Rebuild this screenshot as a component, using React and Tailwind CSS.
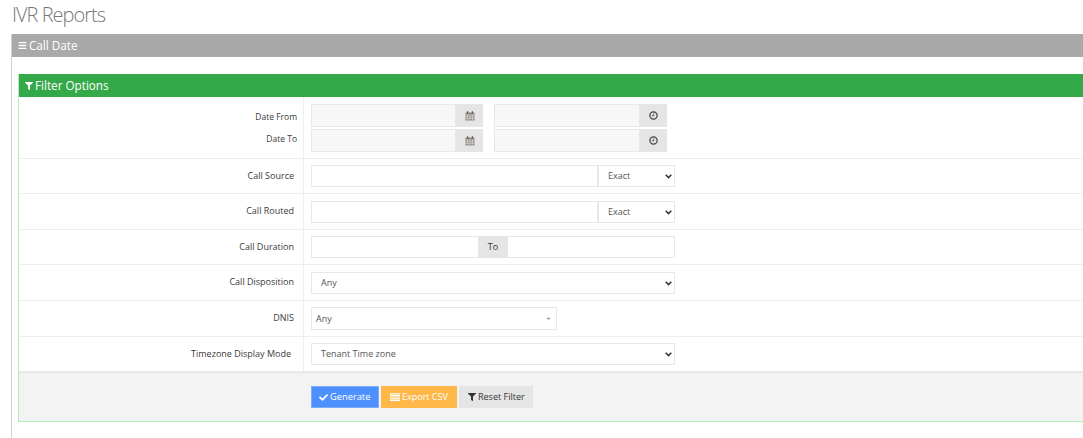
import { FaBars, FaFilter, FaCheck, FaCaretDown } from 'react-icons/fa';

const inputClass = "min-w-0 border border-[#e8e8e8] bg-white outline-none";

function CalendarIcon() {
  return (
    <svg viewBox="0 0 10 10" className="w-[10px] h-[10px]">
      <rect x="0.5" y="1.5" width="9" height="8" fill="#8a8578" />
      <path d="M0.5 4H9.5M0.5 5.8H9.5M0.5 7.6H9.5M2.6 3.5V9.5M5 3.5V9.5M7.4 3.5V9.5" stroke="#e5e5e5" strokeWidth="0.6" />
      <path d="M2.6 0.3V2.3M7.4 0.3V2.3" stroke="#555" strokeWidth="1.2" />
    </svg>
  );
}

function ClockIcon() {
  return (
    <svg viewBox="0 0 10 10" className="w-[9px] h-[9px]">
      <circle cx="5" cy="5" r="4" fill="none" stroke="#444" strokeWidth="1.4" />
      <path d="M5.3 2.6V5.3H3.2" fill="none" stroke="#444" strokeWidth="0.9" />
    </svg>
  );
}

function RowsIcon() {
  return (
    <svg viewBox="0 0 10 8" className="w-[10px] h-[8px]">
      <path d="M0 0.7H10M0 2.3H10M0 4H10M0 5.7H10M0 7.3H10" stroke="#fff" strokeWidth="1.15" />
    </svg>
  );
}

function Row({ label, labelClass = "pr-[9px]", height, children }) {
  return (
    <div className={`flex border-b border-[#eeeeee] ${height}`}>
      <div className={`w-[285px] shrink-0 flex items-center justify-end border-r border-[#eeeeee] pb-[1px] text-[#3a3a3a] ${labelClass}`}>
        {label}
      </div>
      <div className="flex-1 pl-[7px] flex items-center">{children}</div>
    </div>
  );
}

function AddonInput({ width, icon }) {
  return (
    <div className={`flex h-[23px] ${width}`}>
      <input className="flex-1 min-w-0 border border-[#e8e8e8] bg-[#f7f7f7] outline-none" readOnly />
      <span className="w-[27px] shrink-0 flex items-center justify-center bg-[#e5e5e5]">{icon}</span>
    </div>
  );
}

function NativeSelect({ value, className }) {
  return (
    <div className={`relative h-[22px] ${className}`}>
      <select defaultValue={value} className="w-full h-full appearance-none border border-[#e8e8e8] bg-white pl-[9px] text-[9px] text-[#555] outline-none">
        <option>{value}</option>
      </select>
      <svg viewBox="0 0 7 5" className="absolute right-[3px] top-[9px] w-[7px] h-[5px]">
        <path d="M0.7 0.8L3.5 3.6L6.3 0.8" fill="none" stroke="#333" strokeWidth="1.5" />
      </svg>
    </div>
  );
}

export default function App() {
  return (
    <div className="w-[1083px] h-[438px] overflow-hidden bg-white text-[9px] font-['Open_Sans',sans-serif]">
      <h1 className="h-[34px] pl-[12px] pt-[1px] text-[20px] leading-[28px] tracking-[-1px] font-light text-[#777]">IVR Reports</h1>
      <div className="ml-[11px] h-[404px] border-l border-[#d0d0d0]">
        <div className="h-[23px] bg-[#a9a9a9] pl-[6px] flex items-center gap-[2px] text-[11.7px] text-white">
          <FaBars className="w-[9px] h-[9px]" />
          <span>Call Date</span>
        </div>
        <div className="pl-[6px] pt-[17px]">
          <div className="border-l border-b border-[#b5ecb8]">
            <div className="h-[23px] bg-[#34a94a] pl-[6px] flex items-center gap-[2px] text-[11.7px] text-white">
              <FaFilter className="w-[8px] h-[8px]" />
              <span>Filter Options</span>
            </div>

            <div className="flex h-[62px] border-b border-[#eeeeee]">
              <div className="w-[285px] shrink-0 border-r border-[#eeeeee] pt-[13px] pr-[6px] text-right text-[8.5px] text-[#3a3a3a] leading-[13px]">
                <div>Date From</div>
                <div className="mt-[9px]">Date To</div>
              </div>
              <div className="flex-1 pl-[7px] pt-[7px] flex flex-col gap-[2px]">
                <div className="flex gap-[11px]">
                  <AddonInput width="w-[172px]" icon={<CalendarIcon />} />
                  <AddonInput width="w-[173px]" icon={<ClockIcon />} />
                </div>
                <div className="flex gap-[11px]">
                  <AddonInput width="w-[172px]" icon={<CalendarIcon />} />
                  <AddonInput width="w-[173px]" icon={<ClockIcon />} />
                </div>
              </div>
            </div>

            <Row label="Call Source" height="h-[35px]">
              <div className="flex w-[364px]">
                <input className={`${inputClass} h-[22px] w-[287px]`} />
                <NativeSelect value="Exact" className="flex-1" />
              </div>
            </Row>
            <Row label="Call Routed" height="h-[36px]">
              <div className="flex w-[364px]">
                <input className={`${inputClass} h-[22px] w-[287px]`} />
                <NativeSelect value="Exact" className="flex-1" />
              </div>
            </Row>
            <Row label="Call Duration" height="h-[35px]">
              <div className="flex w-[364px] h-[22px]">
                <input className={`${inputClass} w-[168px]`} />
                <span className="w-[28px] shrink-0 flex items-center justify-center bg-[#e5e5e5] text-[#333]">To</span>
                <input className={`${inputClass} flex-1`} />
              </div>
            </Row>
            <Row label="Call Disposition" height="h-[36px]">
              <NativeSelect value="Any" className="w-[364px]" />
            </Row>
            <Row label="DNIS" height="h-[36px]">
              <div className="w-[246px] h-[23px] border border-[#e8e8e8] flex items-center justify-between pl-[4px] pr-[4px] text-[#555]">
                <span>Any</span>
                <FaCaretDown className="w-[7px] h-[7px] text-[#999]" />
              </div>
            </Row>
            <Row label="Timezone Display Mode" labelClass="pr-[12px]" height="h-[35px]">
              <NativeSelect value="Tenant Time zone" className="w-[364px]" />
            </Row>

            <div className="h-[49px] bg-[#f3f3f3] border-t border-[#e3e3e3] pl-[292px] pt-[13px] flex gap-[2px]">
              <button className="w-[68px] h-[22px] border border-[#7aacff] bg-[#4d90fe] text-[9.3px] text-white flex items-center pl-[7px] gap-[2px]">
                <FaCheck className="w-[9px] h-[9px]" />Generate
              </button>
              <button className="w-[76px] h-[22px] bg-[#ffb848] text-white flex items-center pl-[9px] gap-[2px]">
                <RowsIcon />Export CSV
              </button>
              <button className="w-[74px] h-[22px] bg-[#e5e5e5] text-[#333] flex items-center pl-[9px] gap-[2px]">
                <FaFilter className="w-[8px] h-[8px]" />Reset Filter
              </button>
            </div>
          </div>
        </div>
      </div>
    </div>
  );
}
